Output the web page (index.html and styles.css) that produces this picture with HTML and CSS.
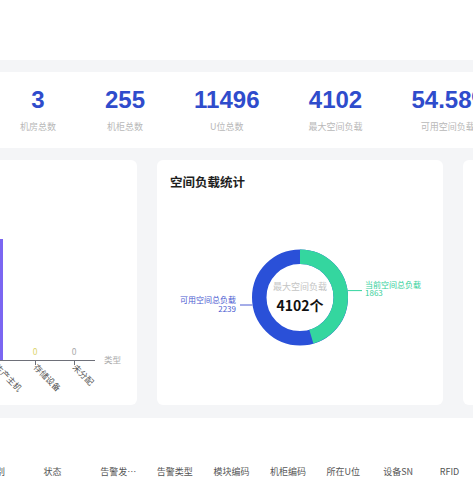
FILE: index.html
```html
<!DOCTYPE html>
<html lang="zh">
<head>
<meta charset="utf-8">
<title>空间负载统计</title>
<link rel="stylesheet" href="styles.css">
</head>
<body>
<header class="top"></header>
<main class="main">
  <section class="stats">
    <div class="stat"><div class="num">3</div><div class="lbl">机房总数</div></div>
    <div class="stat"><div class="num">255</div><div class="lbl">机柜总数</div></div>
    <div class="stat"><div class="num">11496</div><div class="lbl">U位总数</div></div>
    <div class="stat"><div class="num">4102</div><div class="lbl">最大空间负载</div></div>
    <div class="stat"><div class="num">54.58%</div><div class="lbl">可用空间负载率</div></div>
  </section>
  <section class="charts">
    <div class="card">
      <svg class="chart" width="286" height="245" viewBox="0 0 286 245">
        <rect x="138" y="79" width="14" height="121" fill="#7b66f2"/>
        <text x="145" y="74" class="t-small" fill="#999" text-anchor="middle">3</text>
        <line x1="90" y1="200.5" x2="244" y2="200.5" stroke="#6e7079" stroke-width="1"/>
        <line x1="145.5" y1="200" x2="145.5" y2="205" stroke="#6e7079"/>
        <line x1="184.5" y1="200" x2="184.5" y2="205" stroke="#6e7079"/>
        <line x1="223.5" y1="200" x2="223.5" y2="205" stroke="#6e7079"/>
        <text x="184" y="195" class="t-small" fill="#dcd46c" text-anchor="middle">0</text>
        <text x="223" y="195" class="t-small" fill="#aaa" text-anchor="middle">0</text>
        <text x="253" y="203" class="t-small" fill="#aaa">类型</text>
        <text transform="translate(143 208) rotate(45)" class="t-small" fill="#555">生产主机</text>
        <text transform="translate(182 208) rotate(45)" class="t-small" fill="#555">存储设备</text>
        <text transform="translate(221 208) rotate(45)" class="t-small" fill="#555">未分配</text>
      </svg>
    </div>
    <div class="card">
      <h2 class="card-title">空间负载统计</h2>
      <svg class="chart" width="286" height="214" viewBox="0 0 286 214">
        <g transform="rotate(-90 143 106.5)">
          <circle cx="143" cy="106.5" r="40.75" fill="none" stroke="#2a50d8" stroke-width="14.5"/>
          <circle cx="143" cy="106.5" r="40.75" fill="none" stroke="#34d69f" stroke-width="14.5" stroke-dasharray="116.3 300"/>
        </g>
        <text x="143" y="99" class="t-center" fill="#c4c4c4" text-anchor="middle">最大空间负载</text>
        <text x="143" y="120" class="t-big" fill="#111" text-anchor="middle">4102个</text>
        <polyline points="83,114 95.5,114" fill="none" stroke="#4b5bd1" stroke-width="1"/>
        <text x="79" y="112" class="t-lab" fill="#4b5bd1" text-anchor="end">可用空间总负载</text>
        <text x="79" y="121" class="t-lab" fill="#4b5bd1" text-anchor="end">2239</text>
        <polyline points="190.5,99.6 205,99.6" fill="none" stroke="#34d69f" stroke-width="1"/>
        <text x="208" y="97" class="t-lab" fill="#34cf9a">当前空间总负载</text>
        <text x="208" y="105" class="t-lab" fill="#34cf9a">1863</text>
      </svg>
    </div>
    <div class="card"></div>
  </section>
  <section class="table">
    <div class="thead">
      <div class="th">类别</div>
      <div class="th">状态</div>
      <div class="th">告警发生时间</div>
      <div class="th">告警类型</div>
      <div class="th">模块编码</div>
      <div class="th">机柜编码</div>
      <div class="th">所在U位</div>
      <div class="th">设备SN</div>
      <div class="th">RFID</div>
    </div>
  </section>
</main>
</body>
</html>
```
FILE: styles.css
```css
html, body {
  margin: 0;
  padding: 0;
  overflow: hidden;
}
body {
  background: #f4f5f7;
  font-family: "Noto Sans CJK SC", "Liberation Sans", sans-serif;
  width: 473px;
  height: 477px;
}
.top {
  height: 60px;
  background: #fff;
}
.main {
  margin-left: -149px;
  width: 898px;
  padding-top: 12px;
  display: flex;
  flex-direction: column;
}
.stats {
  height: 76px;
  background: #fff;
  border-radius: 6px;
  display: flex;
  gap: 49px;
  padding-left: 169px;
  box-sizing: border-box;
}
.stat {
  display: flex;
  flex-direction: column;
  align-items: center;
  padding-top: 16px;
}
.num {
  font-family: "Liberation Sans", Arial, sans-serif;
  font-weight: bold;
  font-size: 24px;
  line-height: 24px;
  color: #2f4ccc;
}
.lbl {
  margin-top: 9px;
  font-size: 9px;
  line-height: 12px;
  color: #b8b8b8;
  white-space: nowrap;
}
.charts {
  margin-top: 12px;
  display: grid;
  grid-template-columns: 286px 286px 286px;
  gap: 20px;
  height: 245px;
}
.card {
  background: #fff;
  border-radius: 6px;
  display: flex;
  flex-direction: column;
}
.card-title {
  margin: 0;
  padding: 13px 0 0 13px;
  font-size: 12.5px;
  line-height: 18px;
  font-weight: bold;
  color: #1f1f1f;
}
.chart {
  display: block;
}
.t-small {
  font-family: "Noto Sans CJK SC", sans-serif;
  font-size: 8.5px;
}
.t-lab {
  font-family: "Noto Sans CJK SC", sans-serif;
  font-size: 8px;
}
.t-center {
  font-family: "Noto Sans CJK SC", sans-serif;
  font-size: 9px;
}
.t-big {
  font-family: "Noto Sans CJK SC", sans-serif;
  font-size: 14px;
  font-weight: bold;
}
.table {
  margin-top: 13px;
  background: #fff;
  height: 80px;
  padding-top: 42px;
  padding-left: 128px;
  box-sizing: border-box;
}
.thead {
  display: flex;
}
.th {
  width: 56.6px;
  flex: none;
  box-sizing: border-box;
  padding: 0 8px;
  font-size: 9px;
  line-height: 24px;
  color: #555;
  white-space: nowrap;
  overflow: hidden;
  text-overflow: ellipsis;
}
```
